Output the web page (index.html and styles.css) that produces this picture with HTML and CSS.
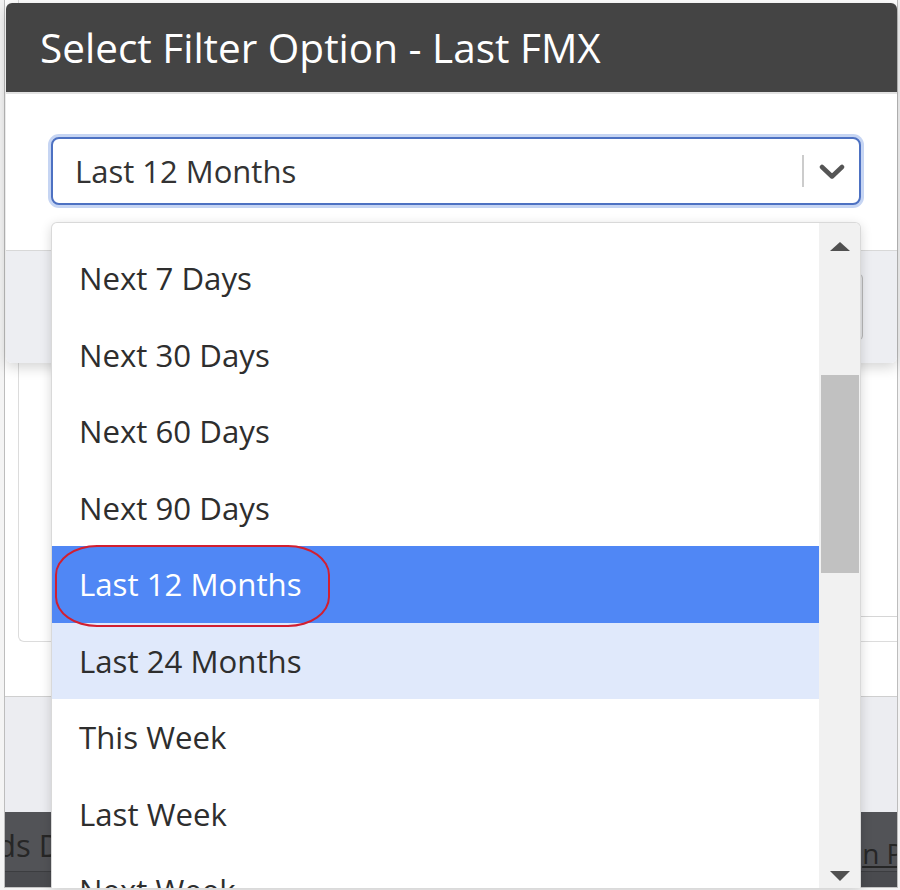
FILE: index.html
```html
<!DOCTYPE html>
<html lang="en">
<head>
<meta charset="utf-8">
<title>Select Filter Option</title>
<link rel="stylesheet" href="styles.css">
</head>
<body>
<div class="page">
  <div class="frame">
    <div class="upper">
      <div class="panel">
        <div class="panel-line"></div>
      </div>
    </div>
    <div class="grey-area"></div>
    <div class="dark-bar">
      <span class="dark-left">ds D</span>
      <span class="dark-right">n Pa</span>
    </div>
    <div class="dark-bar2"></div>
  </div>

  <div class="modal">
    <div class="modal-header">
      <h1 class="modal-title">Select Filter Option - Last FMX</h1>
    </div>
    <div class="modal-body">
      <div class="select">
        <span class="select-value">Last 12 Months</span>
        <span class="select-sep"></span>
        <span class="select-arrow">
          <svg width="26" height="16" viewBox="0 0 26 16"><path d="M3 3 L13 12.5 L23 3" fill="none" stroke="#555" stroke-width="4.5" stroke-linecap="round" stroke-linejoin="round"/></svg>
        </span>
      </div>
    </div>
    <div class="modal-footer">
      <button class="footer-btn">Cancel</button>
    </div>
  </div>

  <div class="dropdown">
    <ul class="options">
      <li class="option">Next 7 Days</li>
      <li class="option">Next 30 Days</li>
      <li class="option">Next 60 Days</li>
      <li class="option">Next 90 Days</li>
      <li class="option selected">Last 12 Months</li>
      <li class="option hover">Last 24 Months</li>
      <li class="option">This Week</li>
      <li class="option">Last Week</li>
      <li class="option">Next Week</li>
    </ul>
    <div class="scrollbar">
      <span class="arrow-up"></span>
      <span class="thumb"></span>
      <span class="arrow-down"></span>
    </div>
  </div>

  <div class="annotation"></div>
</div>
</body>
</html>
```

FILE: styles.css
```css
* { box-sizing: border-box; }

html, body {
  margin: 0;
  padding: 0;
}

body {
  width: 900px;
  height: 890px;
  overflow: hidden;
  background: #ffffff;
  font-family: "Open Sans", "Noto Sans", sans-serif;
}

.page {
  position: relative;
  width: 900px;
  height: 890px;
  overflow: hidden;
  background: #f4f4f4;
}

/* background page */
.frame {
  margin-left: 4px;
  width: 894px;
  height: 888px;
  border-left: 1px solid #bdbdbd;
  border-right: 1px solid #bdbdbd;
  border-bottom: 1px solid #c4c4c4;
  background: #ffffff;
  display: flex;
  flex-direction: column;
}

.upper {
  height: 697px;
  padding-left: 13px;
  border-bottom: 1px solid #cfcfcf;
}

.panel {
  height: 642px;
  border: 1px solid #dcdcdc;
  border-top: none;
  border-right: none;
  border-radius: 0 0 0 6px;
  display: flex;
  flex-direction: column;
  justify-content: flex-end;
}

.panel-line {
  margin-left: 400px;
  margin-bottom: 24px;
  border-top: 1px solid #d6d6d6;
}

.grey-area {
  height: 115px;
  background: #ecedf1;
}

.dark-bar {
  height: 60px;
  background: #525357;
  border-bottom: 1px solid #3c3d40;
  display: flex;
  align-items: center;
  justify-content: space-between;
  font-size: 31px;
  color: #262626;
  overflow: hidden;
}

.dark-left {
  margin-left: -8px;
  margin-top: 6px;
}

.dark-right {
  margin-right: -22px;
  margin-top: 22px;
  font-size: 28px;
  text-decoration: underline;
}

.dark-bar2 {
  flex: 1;
  background: #4a4b4f;
}

/* modal */
.modal {
  position: absolute;
  left: 6px;
  top: 3px;
  width: 891px;
  height: 360px;
  border-radius: 6px;
  background: #ffffff;
  box-shadow: 0 4px 14px rgba(0, 0, 0, 0.18);
  display: flex;
  flex-direction: column;
  overflow: hidden;
}

.modal-header {
  height: 91px;
  background: #444444;
  border-bottom: 2px solid #e2e2e2;
  display: flex;
  align-items: center;
  padding-left: 34px;
}

.modal-title {
  margin: 0;
  font-size: 40.5px;
  font-weight: 400;
  color: #ffffff;
  line-height: 54px;
}

.modal-body {
  padding: 43px 36px 45px 45px;
}

.select {
  height: 68px;
  border: 2px solid #4d71c2;
  border-radius: 8px;
  box-shadow: 0 0 0 3px #c6d5f3;
  display: flex;
  align-items: center;
  background: #ffffff;
}

.select-value {
  flex: 1;
  padding-left: 22px;
  font-size: 31px;
  color: #333333;
}

.select-sep {
  width: 2px;
  height: 32px;
  background: #cccccc;
}

.select-arrow {
  width: 55px;
  display: flex;
  justify-content: center;
  padding-top: 2px;
}

.modal-footer {
  flex: 1;
  background: #edeef2;
  border-top: 1px solid #d8d8d8;
  display: flex;
  justify-content: flex-end;
  align-items: flex-start;
  padding: 23px 34px 0 0;
}

.footer-btn {
  width: 150px;
  height: 66px;
  border: 1px solid #b8b8b8;
  border-radius: 4px;
  background: #e3e4e8;
  font-family: inherit;
  font-size: 24px;
  color: #333;
}

/* dropdown */
.dropdown {
  position: absolute;
  left: 51px;
  top: 222px;
  width: 810px;
  height: 666px;
  background: #ffffff;
  border: 1px solid #d9d9d9;
  border-bottom: none;
  border-radius: 6px 6px 0 0;
  box-shadow: 0 3px 12px rgba(0, 0, 0, 0.16);
  display: flex;
  overflow: hidden;
}

.options {
  flex: 1;
  margin: 0;
  padding: 17px 0 0 0;
  list-style: none;
}

.option {
  height: 76.5px;
  display: flex;
  align-items: center;
  padding-left: 27px;
  font-size: 31.2px;
  color: #2e2e2e;
}

.option.selected {
  background: #5087f5;
  color: #ffffff;
}

.option.hover {
  background: #e0e9fb;
}

.scrollbar {
  width: 41px;
  background: #f1f1f1;
  display: flex;
  flex-direction: column;
  align-items: center;
}

.arrow-up {
  margin-top: 19px;
  width: 0;
  height: 0;
  border-left: 10px solid transparent;
  border-right: 10px solid transparent;
  border-bottom: 9px solid #505050;
}

.thumb {
  margin-top: 124px;
  width: 38px;
  height: 198px;
  background: #c1c1c1;
}

.arrow-down {
  margin-top: auto;
  margin-bottom: 7px;
  width: 0;
  height: 0;
  border-left: 10px solid transparent;
  border-right: 10px solid transparent;
  border-top: 10px solid #505050;
}

/* red annotation ring */
.annotation {
  position: absolute;
  left: 55px;
  top: 545px;
  width: 275px;
  height: 82px;
  border: 2px solid #d21f30;
  border-radius: 42px / 30px;
}
```
